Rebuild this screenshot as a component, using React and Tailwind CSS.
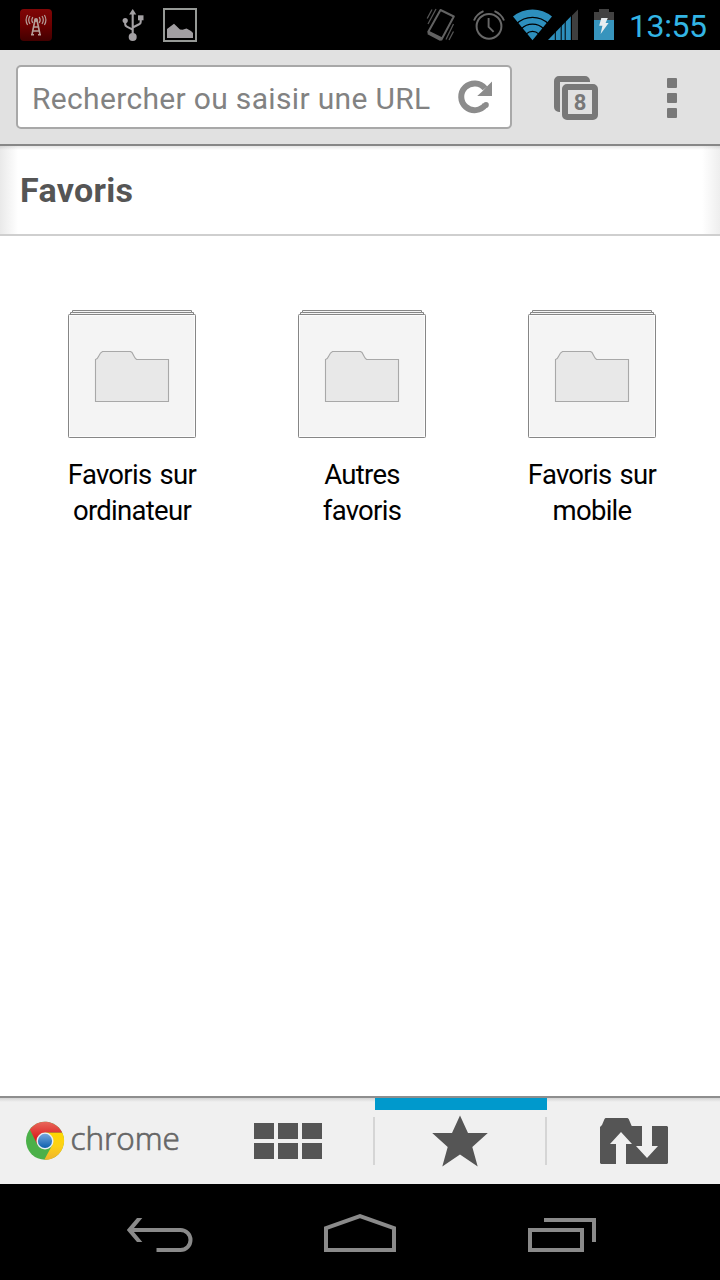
import React from 'react';

function StatusBar() {
  return (
    <div className="flex h-[50px] items-start bg-black">
      <svg className="ml-5 mt-2 h-[34px] w-8 shrink-0" viewBox="20 8 32 34" fill="none">
        <defs>
          <linearGradient id="antenna" x1="0" y1="0" x2="0" y2="1">
            <stop offset="0" stopColor="#800606" />
            <stop offset="0.5" stopColor="#6c0000" />
            <stop offset="1" stopColor="#420000" />
          </linearGradient>
        </defs>
        <rect x="20" y="9" width="32" height="32" rx="4" fill="url(#antenna)" />
        <g stroke="#b59e98" strokeWidth="1.6">
          <path d="M35 20 L32 34.5 M37 20 L40 34.5 M34 27h4M33 31h6M31 34.8h3M38 34.8h3" />
          <path d="M32.8 17q-2 3 0 6M30 16q-2.6 4 0 8M27.6 15q-3 5 0 10M39.2 17q2 3 0 6M42 16q2.6 4 0 8M44.4 15q3 5 0 10" strokeWidth="1.2" />
        </g>
        <circle cx="36" cy="20" r="2" fill="#b59e98" />
      </svg>
      <svg className="ml-[70px] mt-2 h-[34px] w-[23px] shrink-0" viewBox="122 8 23 34" fill="none">
        <g fill="#a3a0a3">
          <path d="M132.7 9l3.6 5.5h-7.2z" />
          <circle cx="132.7" cy="37" r="4" />
          <circle cx="125.2" cy="20.5" r="2.6" />
          <path d="M138 15.3h5.5v5H138z" />
        </g>
        <path d="M132.7 13v22M125.2 21v3.2q0 1.6 1.6 2.4l5.9 3M140.7 20v2q0 1.5-1.6 2.2l-6.4 3.3" stroke="#a3a0a3" strokeWidth="2.1" />
      </svg>
      <svg className="ml-[18px] mt-2 h-[34px] w-[34px] shrink-0" viewBox="163 8 34 34" fill="none">
        <rect x="164" y="9" width="32" height="32" stroke="#969996" strokeWidth="2" />
        <path d="M167 38V29l7-5.2 6 5.8 2.5.2 4-1.4 4.5 2.5 2 2V38z" fill="#a19ea1" />
      </svg>
      <svg className="ml-[229px] mt-2 h-[35px] w-[30px] shrink-0" viewBox="426 8 30 35" fill="none">
        <path d="M440.5 10 L453.8 16.5 L441.5 39.5 L428.2 32z" stroke="#626262" strokeWidth="2" strokeLinejoin="round" />
        <path d="M428.3 30.5 L442.5 37.4 L440.3 41 L427.5 34.2z" fill="#626262" />
        <path d="M436 9L428 24M432 9.5L427.2 18.5M453.5 24L446 39.5M453.5 31.5L449 40" stroke="#555" strokeWidth="1.3" />
      </svg>
      <svg className="ml-[17px] mt-2 h-[34px] w-8 shrink-0" viewBox="473 8 32 34" fill="none" stroke="#686868">
        <circle cx="489" cy="26.3" r="12.4" strokeWidth="2" />
        <path d="M488.6 18v8.8l5 5" strokeWidth="1.9" />
        <path d="M474 20.5q2.5-6.2 9.5-9.3M504 20.5q-2.5-6.2-9.5-9.3" strokeWidth="1.9" />
      </svg>
      <svg className="ml-2 mt-2 h-[34px] w-[66px] shrink-0" viewBox="513 8 66 34" fill="none">
        <path d="M532.5 40.2L513 16.6A30 30 0 0 1 552 16.6z" fill="#2d8fbd" />
        <g stroke="#000" strokeWidth="1.3">
          <circle cx="532.5" cy="40" r="22.7" />
          <circle cx="532.5" cy="40" r="15.8" />
          <circle cx="532.5" cy="40" r="8.7" />
        </g>
        <path d="M571.8 40V15.8l6.2-6.2V40z" fill="#3f3f3f" />
        <path d="M548 40l23-23.8V40z" fill="#2d8fbd" />
        <path d="M555.3 30v10M561.2 24v16M565.2 20v20M571.3 12v28" stroke="#000" strokeWidth="1" />
      </svg>
      <svg className="ml-[15px] mt-2 h-8 w-5 shrink-0" viewBox="594 8 20 32">
        <path d="M594 12h5V9h10v3h5v8h-20z" fill="#424242" />
        <path d="M594 20h20v20h-20z" fill="#3794bd" />
        <path d="M601.3 18h6.5l-2.2 5h3l-8 11 1.8-8.2h-3.2z" fill="#e7edf0" />
      </svg>
      <span className="ml-[15px] mt-[6px] whitespace-nowrap font-[Roboto,sans-serif] text-[32px] leading-[40px] tracking-[-0.4px] text-[#33b5e5]">13:55</span>
    </div>
  );
}

function Toolbar() {
  return (
    <div className="flex h-24 items-start border-b-2 border-[#878787] bg-[#e1e1e1] pt-[15px]">
      <div className="ml-4 flex h-16 w-[496px] items-start rounded-[5px] border-2 border-[#a8a8a8] bg-white">
        <span className="ml-[14px] mt-[12px] w-[426px] whitespace-nowrap font-[Roboto,sans-serif] text-[30px] leading-[40px] tracking-[0.33px] text-[#828282]">Rechercher ou saisir une URL</span>
        <svg className="mt-[13px] h-9 w-9 shrink-0" viewBox="458 80 36 36" fill="none">
          <path d="M485.4 104.8A13.4 13.4 0 1 1 485 88.3" stroke="#8c8c8c" strokeWidth="6" />
          <circle cx="486" cy="104.9" r="2.8" fill="#8c8c8c" />
          <path d="M492 81.5V96h-14.8l5-4.6 4.2-4.5z" fill="#8c8c8c" />
        </svg>
      </div>
      <div className="relative ml-[42px] mt-[11px] h-11 w-11">
        <svg className="h-11 w-11" viewBox="554 76 44 44">
          <path d="M560 112h-1a5 5 0 0 1-5-5V81a5 5 0 0 1 5-5h26a5 5 0 0 1 5 5v1h-30z" fill="#787878" />
          <rect x="565" y="87" width="30" height="30" rx="2" fill="#e1e1e1" stroke="#787878" strokeWidth="6" />
        </svg>
        <span className="absolute left-2 top-2 w-9 text-center font-[Roboto,sans-serif] text-[22px] font-bold leading-[37px] text-[#787878]">8</span>
      </div>
      <div className="ml-[69px] mt-[13px] flex flex-col gap-[5px]">
        <i className="h-2.5 w-2.5 rounded-[1px] bg-[#787878]" />
        <i className="h-2.5 w-2.5 rounded-[1px] bg-[#787878]" />
        <i className="h-2.5 w-2.5 rounded-[1px] bg-[#787878]" />
      </div>
    </div>
  );
}

function Folder({ lines }) {
  return (
    <div className="flex w-[230px] flex-col items-center">
      <svg className="h-32 w-32" viewBox="0 0 128 128">
        <g strokeWidth="1" stroke="#868686" fill="#f4f4f4">
          <path d="M2.5 4.5V2.5h2V.5h119v2h2v2z" />
          <path d="M4.5 2.5h119" />
          <rect x=".5" y="4.5" width="127" height="123" rx=".8" />
        </g>
        <rect x="1.5" y="5.5" width="125" height="121" fill="none" stroke="#fcfcfc" />
        <path d="M27.5 49.5q2-.5 3-3l2-3.5 2-1.5h28l1.5 1 3 5.5 1.5 1.5H100.5V91.5h-73z" fill="#e8e8e8" stroke="#a8a8a8" strokeWidth="1.1" />
      </svg>
      <div className="mt-[19px] whitespace-nowrap text-center font-[Roboto,sans-serif] text-[27.5px] leading-9 tracking-[-0.7px] text-black [word-spacing:2px]">
        {lines.map((line) => (
          <div key={line}>{line}</div>
        ))}
      </div>
    </div>
  );
}

function Divider() {
  return <div className="mt-[19px] h-12 w-[2px] shrink-0 bg-[#d5d5d5]" />;
}

function TabBar() {
  return (
    <div className="flex h-[88px] shrink-0 border-t-2 border-[#8e8e8e] bg-[#f0f0f0] bg-[linear-gradient(180deg,#d4d4d4,#f0f0f0_4px)]">
      <div className="flex w-[201px] items-start pl-[26px]">
        <svg className="mt-[23px] h-10 w-[39px] shrink-0" viewBox="26 1121 39 40">
          <defs>
            <linearGradient id="red" x1="0" y1="0" x2="0" y2="1"><stop offset="0" stopColor="#e8685b" /><stop offset=".7" stopColor="#dc1f20" /></linearGradient>
            <linearGradient id="yellow" x1="0" y1="0" x2="0" y2="1"><stop offset="0" stopColor="#ffd800" /><stop offset=".5" stopColor="#fdd116" /><stop offset="1" stopColor="#efb32c" /></linearGradient>
            <linearGradient id="blue" x1="0" y1="0" x2="0" y2="1"><stop offset="0" stopColor="#74a7dd" /><stop offset="1" stopColor="#0c5fae" /></linearGradient>
          </defs>
          <circle cx="45" cy="1140.8" r="19" fill="#4bb049" />
          <path d="M62.2 1132.5A19 19 0 0 1 44.3 1159.8L52.3 1145 45 1132.5z" fill="url(#yellow)" />
          <path d="M29.8 1129.4A19 19 0 0 1 62.2 1132.5H45L37.6 1145z" fill="url(#red)" />
          <circle cx="45" cy="1140.9" r="8.5" fill="#e9f0f5" />
          <circle cx="45" cy="1140.9" r="7.1" fill="url(#blue)" />
        </svg>
        <span className="ml-[5.5px] mt-[18px] font-['Open_Sans',sans-serif] text-[31.5px] font-light leading-[44px] text-[#666] [-webkit-text-stroke:0.7px_#666]">chrome</span>
      </div>
      <div className="flex w-[172px] justify-center pt-[25px]">
        <div className="ml-[2px] grid h-9 grid-cols-3 gap-1">
          {[0, 1, 2, 3, 4, 5].map((i) => (
            <i key={i} className="h-4 w-5 bg-[#555]" />
          ))}
        </div>
      </div>
      <Divider />
      <div className="flex w-[170px] flex-col">
        <div className="h-3 w-[172px] bg-[#0099cc]" />
        <svg className="ml-[56px] mt-[4px] h-[54px] w-[58px]" viewBox="431 1114 58 54">
          <path d="M460 1115.5l8 17.5h19.8l-15.5 14 5.4 19.5-17.7-12-17.7 12 5.4-19.5-15.5-14H452z" fill="#555" />
        </svg>
      </div>
      <Divider />
      <svg className="ml-[53px] mt-5 h-[46px] w-[68px]" viewBox="600 1118 68 46">
        <path d="M600 1163v-36l2-2 2.5-6 1-1h22l1.2 1 3 7H642v20h-6l11 12 11-12h-6v-20h15l1 1v36l-1 1h-41v-20h6l-11-12-11 12h6v20h-15z" fill="#555" />
      </svg>
    </div>
  );
}

function NavigationBar() {
  return (
    <div className="flex h-24 shrink-0 items-start bg-black pt-[30px]">
      <svg className="ml-[127px] h-10 w-[66px]" viewBox="127 1214 66 40" fill="none">
        <path d="M156.5 1250H180.5a10 10 0 0 0 0-20H131" stroke="#8a8a8a" strokeWidth="4" />
        <path d="M137 1218h5.3l-10 12 10 12H137l-10.2-12z" fill="#8a8a8a" />
      </svg>
      <svg className="ml-[131px] h-10 w-[72px]" viewBox="324 1214 72 40" fill="none">
        <path d="M326 1250v-21.8l34-12.1 34 12.1V1250z" stroke="#8a8a8a" strokeWidth="4" />
      </svg>
      <svg className="ml-[132px] h-10 w-[68px]" viewBox="528 1214 68 40" fill="none" stroke="#8a8a8a" strokeWidth="4">
        <path d="M530 1230h52v20h-52zM544 1220h50v22" />
      </svg>
    </div>
  );
}

export default function App() {
  return (
    <div className="flex h-[1280px] w-[720px] flex-col overflow-hidden bg-white">
      <StatusBar />
      <Toolbar />
      <div className="h-[90px] border-b-2 border-[#cfcfcf] bg-[linear-gradient(180deg,#00000018,#00000000_4px),linear-gradient(90deg,#e9e9e9,#fff0_18px,#fff0_702px,#eeeeee)]">
        <h1 className="ml-5 mt-[24px] whitespace-nowrap font-[Roboto,sans-serif] text-[34px] font-bold leading-[40px] tracking-[0.3px] text-[#555]">Favoris</h1>
      </div>
      <main className="flex flex-1 items-start pl-[17px] pt-[74px]">
        <Folder lines={['Favoris sur', 'ordinateur']} />
        <Folder lines={['Autres', 'favoris']} />
        <Folder lines={['Favoris sur', 'mobile']} />
      </main>
      <TabBar />
      <NavigationBar />
    </div>
  );
}
